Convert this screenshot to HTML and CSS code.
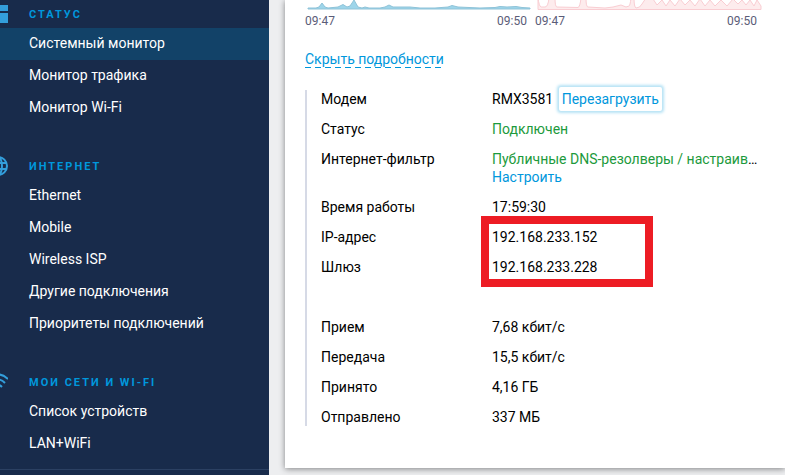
FILE: index.html
```html
<!DOCTYPE html>
<html lang="ru">
<head>
<meta charset="utf-8">
<meta name="viewport" content="width=device-width, initial-scale=1">
<title>Системный монитор</title>
<link rel="stylesheet" href="styles.css">
</head>
<body>
<div class="app">
  <nav class="sidebar">
    <section class="menu">
      <svg class="menu-icon" viewBox="0 0 20 20" aria-hidden="true"><path fill="currentColor" d="M0 1h9v10H0zM11 1h9v6h-9zM0 13h9v6H0zM11 9h9v10h-9z"/></svg>
      <h2>Статус</h2>
      <ul>
        <li><a class="active" href="#">Системный монитор</a></li>
        <li><a href="#">Монитор трафика</a></li>
        <li><a href="#">Монитор Wi-Fi</a></li>
      </ul>
    </section>
    <section class="menu">
      <svg class="menu-icon" viewBox="0 0 20 20" fill="none" stroke="currentColor" stroke-width="2" aria-hidden="true"><circle cx="10" cy="10" r="9"/><ellipse cx="10" cy="10" rx="4" ry="9"/><path d="M2 7h16M2 13h16"/></svg>
      <h2>Интернет</h2>
      <ul>
        <li><a href="#">Ethernet</a></li>
        <li><a href="#">Mobile</a></li>
        <li><a href="#">Wireless ISP</a></li>
        <li><a href="#">Другие подключения</a></li>
        <li><a href="#">Приоритеты подключений</a></li>
      </ul>
    </section>
    <section class="menu">
      <svg class="menu-icon" viewBox="0 0 20 20" fill="none" stroke="currentColor" stroke-width="2" aria-hidden="true"><path d="M0 7Q10-2 20 7M3 11q7-7 14 0M6 15q4-4 8 0"/><circle cx="10" cy="17" r="1"/></svg>
      <h2>Мои сети и Wi-Fi</h2>
      <ul>
        <li><a href="#">Список устройств</a></li>
        <li><a href="#">LAN+WiFi</a></li>
      </ul>
    </section>
  </nav>
  <main>
    <article class="card">
      <div class="charts">
        <figure>
          <svg viewBox="0 0 230 11" preserveAspectRatio="none" aria-hidden="true"><path fill="#9dd5ea" stroke="#8fc3d8" d="M3 8H11L14 7 17 3 20 7 23 8 33 7 38 4.500 42 7 45 6 49 0 53 7 57 8 60 7 64 8H75L80 7 84 5 88 7 105 7 115 8H130L143 7 147 5.500 153 7 175 8 190 7.500 195 6.500 202 7 211 6.500 217 7.500 225 8V9H3z"/></svg>
          <figcaption><span>09:47</span><span>09:50</span></figcaption>
        </figure>
        <figure>
          <svg viewBox="0 0 230 11" preserveAspectRatio="none" aria-hidden="true"><path fill="#fdeced" stroke="#f9cdd2" d="M3-2Q4 6 6 7H10Q13 7 14-2H20Q20 7 22 7L43 7.500Q45 7 46-2H51Q51 7 53 7L70 8 78 7 86 5 91 7 94 6Q95 6 96-2H99Q99 7 101 8 105 8 107 4L111-2 118-1 122 5 127 0 131 6 135 0 140 6 145-1 150 5 155 0 160 6 165-1 170 6 175 0 180 6 186 0 192 6 198-1 203 4 207 0 211 5 215 0 219 6 222 0 226 6V9.500H3z"/></svg>
          <figcaption><span>09:47</span><span>09:50</span></figcaption>
        </figure>
      </div>
      <a class="toggle" href="#">Скрыть подробности</a>
      <dl class="details">
        <div><dt>Модем</dt><dd>RMX3581 <button type="button">Перезагрузить</button></dd></div>
        <div><dt>Статус</dt><dd class="ok">Подключен</dd></div>
        <div><dt>Интернет-фильтр</dt><dd><p><span class="ok">Публичные DNS-резолверы / настраив</span>…</p><a href="#">Настроить</a></dd></div>
        <div><dt>Время работы</dt><dd>17:59:30</dd></div>
        <div class="address"><dt>IP-адрес</dt><dd>192.168.233.152</dd></div>
        <div><dt>Шлюз</dt><dd>192.168.233.228</dd></div>
        <div class="traffic"><dt>Прием</dt><dd>7,68 кбит/с</dd></div>
        <div><dt>Передача</dt><dd>15,5 кбит/с</dd></div>
        <div><dt>Принято</dt><dd>4,16 ГБ</dd></div>
        <div><dt>Отправлено</dt><dd>337 МБ</dd></div>
      </dl>
    </article>
  </main>
</div>
</body>
</html>
```
FILE: styles.css
```css
*, *::after { box-sizing: border-box; }
body {
  margin: 0;
  background: #edeef0;
  color: #000;
  font: 14px/18px Roboto, sans-serif;
  overflow: hidden;
}
h2, ul, dl, dd, p, figure { margin: 0; padding: 0; }
a { color: #0097dc; text-decoration: none; }

.app {
  display: grid;
  grid-template-columns: 269px minmax(0, 1fr);
  min-height: 100vh;
}

.sidebar { background: #182b4b; }
.menu { position: relative; margin-bottom: 28px; }
.menu:last-child {
  margin: 0;
  padding-bottom: 9px;
  border-bottom: 1px solid #2b4062;
}
.menu-icon {
  position: absolute;
  left: -12px;
  top: 4px;
  width: 20px;
  height: 20px;
  color: #339edb;
}
.menu h2 {
  padding: 2px 0 0 29px;
  color: #0097dc;
  font-size: 11px;
  font-weight: 700;
  line-height: 26px;
  letter-spacing: 2px;
  text-transform: uppercase;
}
.menu ul { list-style: none; }
.menu a {
  display: block;
  padding: 0 0 2px 29px;
  color: #fff;
  line-height: 30px;
}
.menu a.active { background: #124268; }

main { padding-left: 16px; }
.card {
  padding: 0 20px 42px;
  background: #fff;
  box-shadow: 0 1px 6px rgba(0, 0, 0, .45);
}
.charts { display: grid; grid-template-columns: 1fr 1fr; }
.charts svg { display: block; width: 100%; height: 11px; }
.charts figcaption {
  display: flex;
  justify-content: space-between;
  padding-right: 8px;
  color: #5b5d78;
  font-size: 12px;
  line-height: 20px;
}
.toggle {
  display: inline-block;
  margin: 19px 0 22px;
  background: repeating-linear-gradient(90deg, #0097dc 0 6px, transparent 6px 10px) bottom / 100% 1px no-repeat;
}

.details {
  display: grid;
  gap: 12px;
  padding-left: 14px;
  border-left: 2px solid #d6dae6;
}
.details > div {
  display: grid;
  grid-template-columns: 171px minmax(0, 1fr);
  position: relative;
}
.details p {
  overflow: hidden;
  text-overflow: ellipsis;
  white-space: nowrap;
}
.details button {
  margin: -4px 0 -4px 2px;
  padding: 3px;
  border: 0;
  border-radius: 2px;
  background: none;
  box-shadow: 0 0 3px 2px #b5e2f5;
  color: #0097dc;
  font: inherit;
}
.ok { color: #1c9a3c; }
.details .traffic { margin-top: 30px; }
.address::after {
  content: "";
  position: absolute;
  top: -12px;
  left: 160px;
  width: 172px;
  height: 71px;
  border: 8px solid #ed1c24;
}
```
